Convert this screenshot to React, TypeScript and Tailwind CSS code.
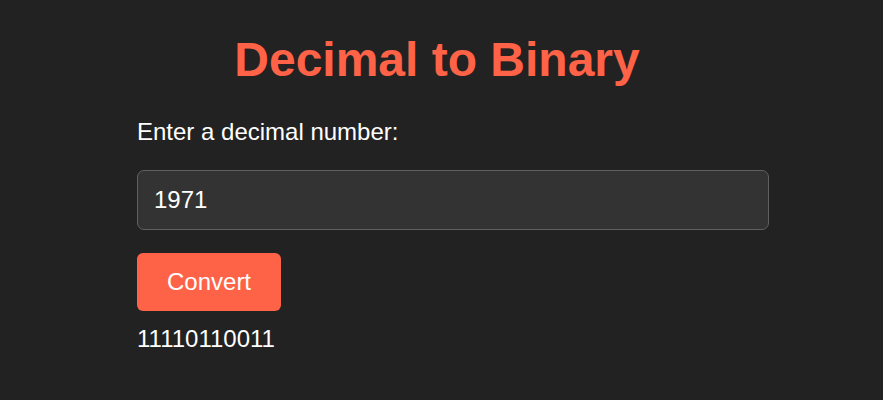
import React, { useState } from "react";

function toBinary(v: string): string {
  const n = parseInt(v, 10);
  if (isNaN(n)) return "";
  return n.toString(2);
}

export default function App() {
  const [value, setValue] = useState("1971");
  const [result, setResult] = useState(toBinary("1971"));

  return (
    <div className="min-h-[400px] w-full bg-[#222222] text-white font-['Liberation_Sans',Arial,sans-serif]">
      <div className="ml-[137px] w-[600px] pt-[32px]">
        <h1 className="text-center text-[48px] leading-[55px] font-bold text-[#ff6347]">
          Decimal to Binary
        </h1>
        <label htmlFor="dec" className="mt-[31px] block text-[24px] leading-[28px]">
          Enter a decimal number:
        </label>
        <input
          id="dec"
          type="text"
          value={value}
          onChange={(e) => setValue(e.target.value)}
          className="mt-[24px] box-content block h-[28px] w-[598px] rounded-[7px] border border-[#606060] bg-[#333333] px-[16px] py-[15px] text-[24px] leading-[28px] text-white outline-none"
        />
        <button
          type="button"
          onClick={() => setResult(toBinary(value))}
          className="mt-[23px] block h-[58px] rounded-[6px] bg-[#ff6347] px-[30px] text-[24px] leading-[28px] text-white"
        >
          Convert
        </button>
        <div className="mt-[14px] text-[24px] leading-[28px]">{result}</div>
      </div>
    </div>
  );
}
